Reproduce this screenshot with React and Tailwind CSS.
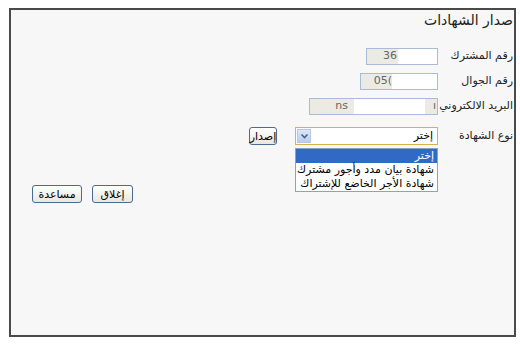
import React from "react";

function XpButton({ children, w }) {
  return (
    <div
      className={`${w} h-[18px] border border-[#4b6a94] rounded-[3px] bg-gradient-to-b from-white to-[#e9e7de] flex items-center justify-center text-[11px] leading-none text-black`}
    >
      {children}
    </div>
  );
}

export default function App() {
  return (
    <div className="w-[520px] h-[351px] bg-white pt-[8px] pl-[9px] font-['DejaVu_Sans',sans-serif]">
      <div
        dir="rtl"
        className="w-[507px] h-[329px] border-2 border-[#4a4a4a] bg-[#f7f7f7] pr-[1px] text-[#222]"
      >
        <div className="h-[34px] text-[14px] leading-[18px] pt-[1px] whitespace-nowrap">
          صدار الشهادات
        </div>

        {/* Row 1 */}
        <div className="flex h-[25px] items-center">
          <div className="w-[75px] text-[11px] whitespace-nowrap">رقم المشترك</div>
          <div dir="ltr" className="w-[72px] h-[17px] border border-[#a8bcd8] flex">
            <div className="w-[31px] bg-[#ebebe4] text-[11px] text-[#666] flex items-center justify-end pr-[1px]">36</div>
            <div className="flex-1 bg-white" />
          </div>
        </div>

        {/* Row 2 */}
        <div className="flex h-[25px] items-center">
          <div className="w-[75px] text-[11px] whitespace-nowrap">رقم الجوال</div>
          <div dir="ltr" className="w-[78px] h-[17px] border border-[#a8bcd8] flex">
            <div className="w-[31px] bg-[#ebebe4] text-[11px] text-[#666] flex items-center justify-end overflow-hidden whitespace-nowrap pr-0">05(</div>
            <div className="flex-1 bg-white" />
          </div>
        </div>

        {/* Row 3 */}
        <div className="flex h-[25px] items-center">
          <div className="w-[75px] text-[11px] whitespace-nowrap">البريد الالكتروني</div>
          <div dir="ltr" className="w-[129px] h-[17px] border border-[#a8bcd8] flex">
            <div className="w-[44px] bg-[#ebebe4] text-[11px] text-[#666] flex items-center justify-end pr-[6px]">ns</div>
            <div className="w-[71px] bg-white" />
            <div className="flex-1 bg-[#ebebe4] text-[11px] text-[#666] flex items-center justify-end pr-[1px]">ı</div>
          </div>
        </div>

        {/* Row 4 */}
        <div className="flex h-[34px] items-center">
          <div className="w-[75px] text-[11px] whitespace-nowrap">نوع الشهادة</div>
          <div className="relative">
            <div dir="ltr" className="w-[143px] h-[18px] border border-[#d9b24e] bg-white flex items-stretch p-[1px]">
              <div className="w-[14px] bg-gradient-to-b from-[#dce7fa] to-[#b9cdf0] border border-[#b7c9e9] flex items-center justify-center">
                <svg width="9" height="8" viewBox="0 0 9 8">
                  <path d="M1.5 2.5 L4.5 5.5 L7.5 2.5" fill="none" stroke="#4d6185" strokeWidth="1.6" />
                </svg>
              </div>
              <div dir="rtl" className="flex-1 text-[11px] flex items-center pr-[3px] text-black">إختر</div>
            </div>
            <div className="absolute top-[21px] right-0 w-[143px] border border-[#8aa2c4] bg-white text-[11px] text-black z-10">
              <div className="h-[14px] bg-[#316ac5] text-white flex items-center pr-[3px]">إختر</div>
              <div className="h-[14px] flex items-center pr-[3px] whitespace-nowrap">شهادة بيان مدد وأجور مشترك</div>
              <div className="h-[14px] flex items-center pr-[3px] whitespace-nowrap">شهادة الأجر الخاضع للإشتراك</div>
            </div>
          </div>
          <div className="mr-[18px]">
            <XpButton w="w-[28px]">إصدار</XpButton>
          </div>
        </div>

        {/* Bottom buttons */}
        <div dir="ltr" className="mt-[32px] pl-[21px] flex gap-[10px]">
          <XpButton w="w-[50px]">مساعدة</XpButton>
          <XpButton w="w-[41px]">إغلاق</XpButton>
        </div>
      </div>
    </div>
  );
}
